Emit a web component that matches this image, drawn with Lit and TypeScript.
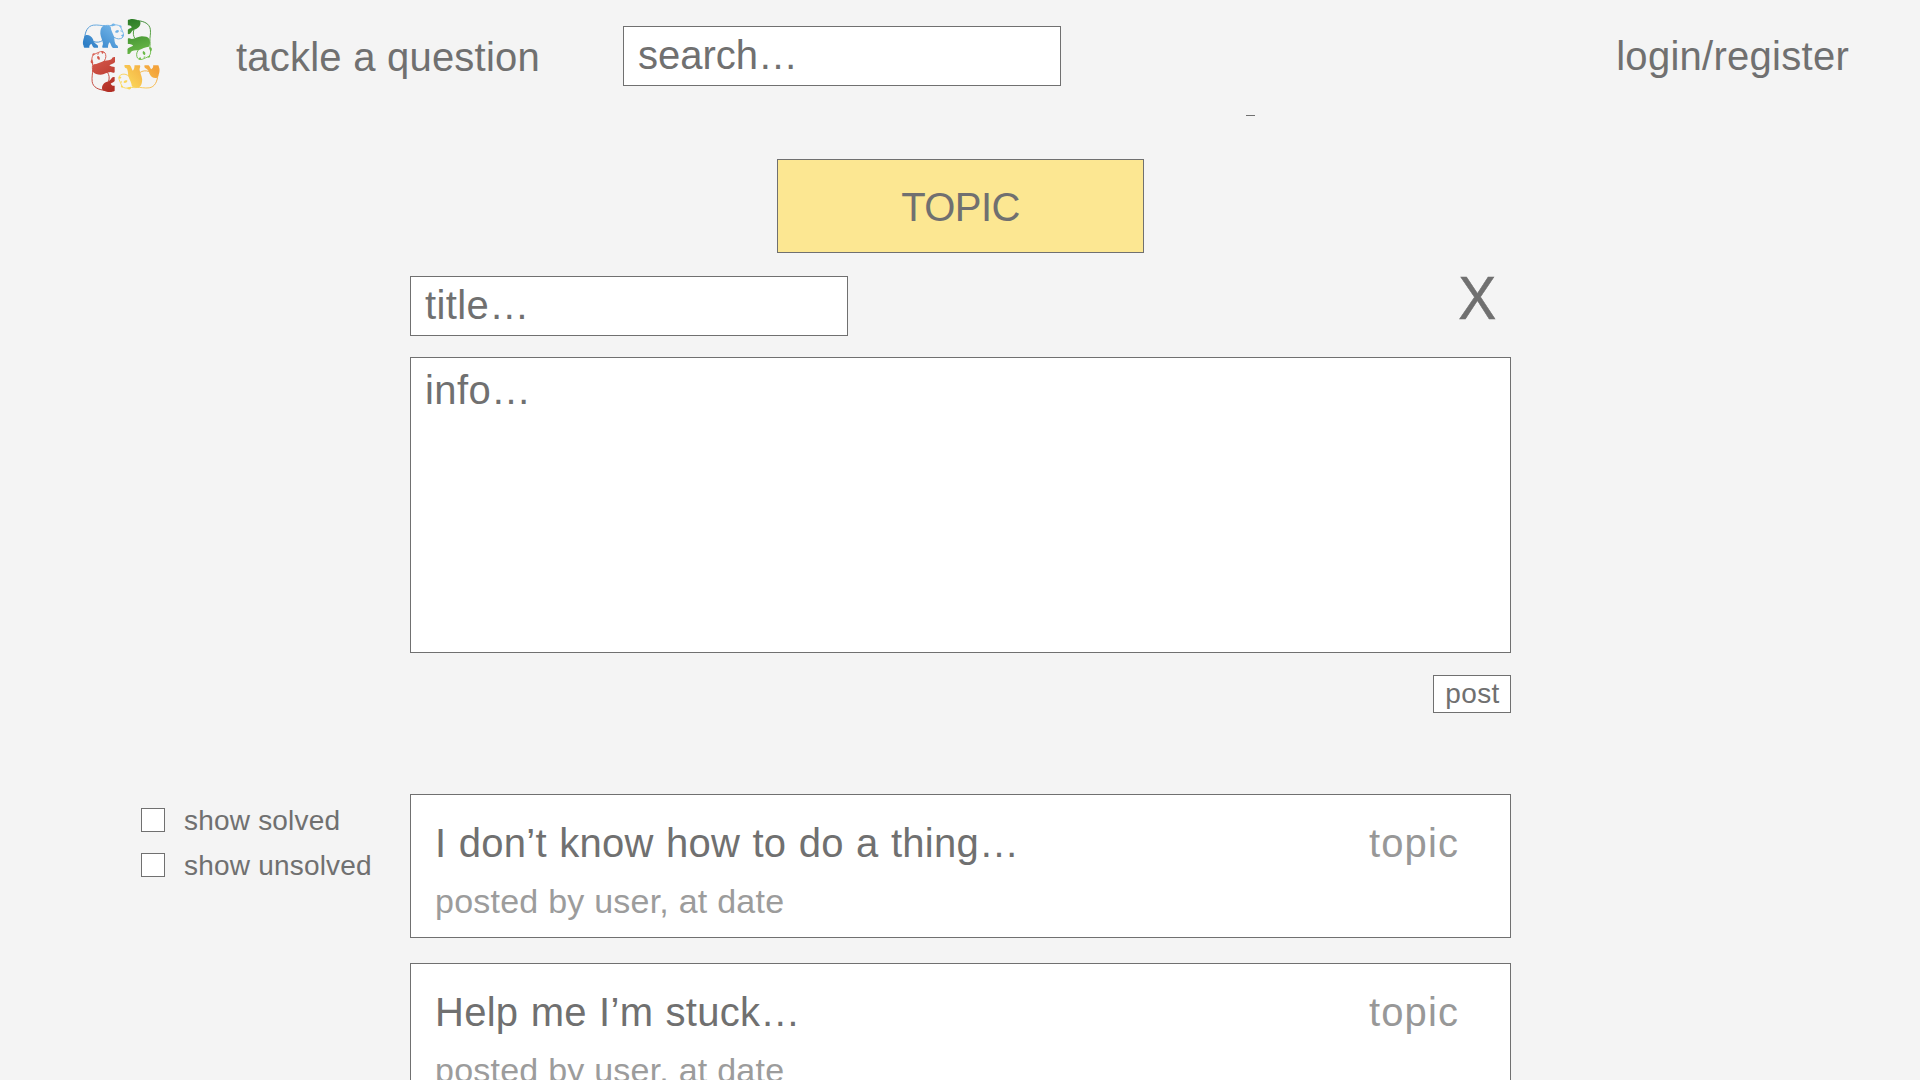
import { LitElement, html, css, svg } from "lit";
import { customElement, property } from "lit/decorators.js";

const panda = (color: string, turn: number, x: number, y: number) => svg`
  <g transform="translate(${x} ${y}) rotate(${turn}) translate(-100 -79)">
    <path fill="none" stroke=${color} stroke-width="2.8" stroke-linecap="round" d="M44 82C46 64 53 48 70 45.500C84 43.500 96 48 106 46.500C116 45 121 48 128 46C136 43.500 146 44 151 50C155 56 157 64 160 70C162 77 159 85 151 86C143 88 136 85 130 80M72 95C80 98 90 97 97 92"/>
    <path fill=${color} d="M46 76C55 73 65 78 69 88C71 98 76 101 81 104C84 106 85 109 84 113H72C68 111 67 104 64 101C60 103 57 107 58 113H43C40 111 42 108 40 106C37 99 40 84 46 76Z"/>
    <path fill=${color} d="M98 49C106 45 118 46 122 50C122 60 129 70 133 82C133 90 134 100 138 104C143 105 145 109 144 114H129C124 112 123 102 119 97C115 101 114 107 114 113H98C95 111 98 106 99 101C98 90 92 82 91 71C91 60 93 53 98 49Z"/>
    <path fill=${color} d="M124 48C123 42 129 39 134 42C138 44 136 47 131 47C128 48 127 50 124 48ZM147 47C152 44 157 48 154 54ZM135 67C137 61 143 58 147 62C147 66 141 71 135 67ZM151 60L156 63L153 67ZM153 76C157 72 162 73 162 76L158 81Z"/>
  </g>`;

@customElement("panda-logo")
export class PandaLogo extends LitElement {
  static styles = css`
    :host { display: block; width: 84px; height: 80px; }
    .art { display: block; width: 84px; height: 80px; }
  `;
  render() {
    return html`<svg class="art" viewBox="30 15 252 240" aria-hidden="true">
      <defs>
        <linearGradient id="blue" gradientUnits="userSpaceOnUse" x1="140" y1="45" x2="75" y2="125"><stop stop-color="#78b9eb"/><stop offset="1" stop-color="#2f7fc6"/></linearGradient>
        <linearGradient id="green" gradientUnits="userSpaceOnUse" x1="45" y1="100" x2="155" y2="70"><stop stop-color="#2f7f28"/><stop offset="1" stop-color="#72c04c"/></linearGradient>
        <linearGradient id="gold" gradientUnits="userSpaceOnUse" x1="60" y1="112" x2="130" y2="50"><stop stop-color="#f3a23a"/><stop offset="1" stop-color="#fad75a"/></linearGradient>
        <linearGradient id="red" gradientUnits="userSpaceOnUse" x1="45" y1="112" x2="150" y2="45"><stop stop-color="#b02c22"/><stop offset="1" stop-color="#d95f52"/></linearGradient>
      </defs>
      ${panda("url(#blue)", 0, 100, 79)}
      ${panda("url(#green)", 90, 207.5, 88)}
      ${panda("url(#gold)", 180, 207.5, 200)}
      ${panda("url(#red)", -90, 100, 185)}
    </svg>`;
  }
}

@customElement("question-card")
export class QuestionCard extends LitElement {
  @property() heading = "";
  @property() meta = "";
  @property() topic = "";
  static styles = css`
    :host { display: block; }
    .card {
      box-sizing: border-box; height: 144px; padding: 25px 51px 0 24px;
      border: 1px solid #707070; background: #fff; color: #707070;
      display: grid; grid-template-columns: 1fr auto; align-content: start;
    }
    .heading, .topic { font-size: 40px; line-height: 46px; white-space: nowrap; }
    .heading { letter-spacing: 0.27px; word-spacing: 0.95px; }
    .topic { color: #989898; letter-spacing: 1.1px; }
    .meta { font-size: 34px; line-height: 40px; margin-top: 15px; color: #9c9c9c; letter-spacing: 0.23px; }
  `;
  render() {
    return html`<article class="card">
      <span class="heading">${this.heading}</span>
      <span class="topic">${this.topic}</span>
      <span class="meta">${this.meta}</span>
    </article>`;
  }
}

@customElement("app-root")
export class AppRoot extends LitElement {
  private questions = [
    { heading: "I don’t know how to do a thing…", meta: "posted by user, at date", topic: "topic" },
    { heading: "Help me I’m stuck…", meta: "posted by user, at date", topic: "topic" },
  ];
  private filters = ["show solved", "show unsolved"];

  static styles = css`
    :host {
      display: block; position: relative; width: 1920px; height: 1080px; overflow: hidden;
      background: #f4f4f4; color: #707070;
      font-family: "Liberation Sans", Arial, sans-serif; font-size: 40px; line-height: 46px;
    }
    .bar { display: flex; align-items: flex-start; height: 159px; box-sizing: border-box; padding: 15px 71px 0 80px; }
    .brand { margin: 19px 0 0 72px; width: 387px; letter-spacing: 0.22px; }
    .field { box-sizing: border-box; height: 60px; width: 438px; border: 1px solid #707070; background: #fff; padding: 5px 14px; }
    .search { margin-top: 11px; }
    .login { margin: 18px 0 0 auto; letter-spacing: 0.27px; }
    .tick { position: absolute; left: 1246px; top: 115px; width: 9px; height: 1px; background: #707070; }
    .columns { display: grid; grid-template-columns: 410px 1101px; }
    .side { padding: 649px 0 0 141px; display: flex; flex-direction: column; gap: 21px; }
    .filter { display: flex; align-items: center; gap: 19px; height: 24px; font-size: 28px; line-height: 32px; white-space: nowrap; }
    .label { padding-top: 2px; letter-spacing: 0.2px; }
    .box { box-sizing: border-box; width: 24px; height: 24px; border: 1px solid #707070; background: #fff; }
    .main { display: flex; flex-direction: column; }
    .pick { box-sizing: border-box; align-self: center; width: 367px; height: 94px; border: 1px solid #707070; background: #fce792; text-align: center; padding-top: 24px; letter-spacing: -0.6px; }
    .row { display: flex; justify-content: space-between; margin-top: 23px; height: 81px; }
    .title, .info { letter-spacing: 0.4px; }
    .close { font-size: 62px; line-height: 44px; padding-right: 14px; transform: scaleX(0.92); -webkit-text-stroke: 0.5px #707070; }
    .info { box-sizing: border-box; height: 296px; border: 1px solid #707070; background: #fff; padding: 9px 14px; }
    .post { box-sizing: border-box; align-self: flex-end; width: 78px; height: 38px; margin-top: 22px; border: 1px solid #707070; background: #fff; font-size: 28px; line-height: 35px; text-align: center; letter-spacing: 0.4px; padding-left: 1px; }
    .list { display: flex; flex-direction: column; gap: 25px; margin-top: 81px; }
  `;

  render() {
    return html`
      <header class="bar">
        <panda-logo></panda-logo>
        <span class="brand">tackle a question</span>
        <div class="field search">search…</div>
        <span class="login">login/register</span>
      </header>
      <div class="tick"></div>
      <div class="columns">
        <aside class="side">
          ${this.filters.map((f) => html`<div class="filter"><span class="box"></span><span class="label">${f}</span></div>`)}
        </aside>
        <main class="main">
          <div class="pick">TOPIC</div>
          <div class="row">
            <div class="field title">title…</div>
            <span class="close">X</span>
          </div>
          <div class="info">info…</div>
          <div class="post">post</div>
          <section class="list">
            ${this.questions.map((q) => html`<question-card .heading=${q.heading} .meta=${q.meta} .topic=${q.topic}></question-card>`)}
          </section>
        </main>
      </div>`;
  }
}
